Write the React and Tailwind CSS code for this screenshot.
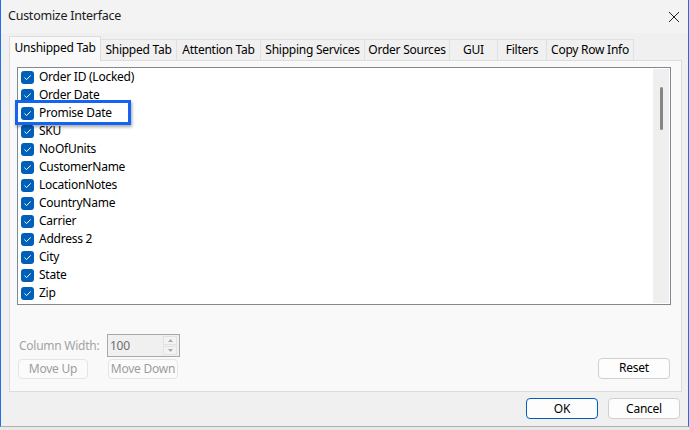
import React from "react";

const items = [
  "Order ID (Locked)",
  "Order Date",
  "Promise Date",
  "SKU",
  "NoOfUnits",
  "CustomerName",
  "LocationNotes",
  "CountryName",
  "Carrier",
  "Address 2",
  "City",
  "State",
  "Zip",
];

const tabs = [
  ["Shipped Tab", 76],
  ["Attention Tab", 84],
  ["Shipping Services", 104],
  ["Order Sources", 85],
  ["GUI", 48],
  ["Filters", 49],
  ["Copy Row Info", 87],
];

function Check() {
  return (
    <div className="w-[13px] h-[13px] rounded-[3px] bg-[#005fb8] flex items-center justify-center shrink-0">
      <svg width="9" height="9" viewBox="0 0 9 9">
        <path d="M1.5 4.6 L3.6 6.6 L7.6 2.4" fill="none" stroke="white" strokeWidth="1" />
      </svg>
    </div>
  );
}

export default function App() {
  return (
    <div className="w-[689px] h-[430px] bg-[#e8e8e8] overflow-hidden" style={{ fontFamily: '"Noto Sans", "Open Sans", sans-serif' }}>
      <div className="w-[689px] h-[427px] bg-[#f0f0f0] border-l border-r border-[#1f6fe8] border-b border-b-[#b0b0b0] relative flex flex-col text-[12px] tracking-[-0.25px] text-[#000]">
        {/* title bar */}
        <div className="h-[33px] flex items-center justify-between pl-[7px] pr-[6px] bg-[#f3f3f3]">
          <span className="text-[12.5px] text-[#1a1a1a]">Customize Interface</span>
          <svg width="12" height="12" viewBox="0 0 12 12" className="mr-[2px]">
            <path d="M1 1 L11 11 M11 1 L1 11" stroke="#222" strokeWidth="1" />
          </svg>
        </div>
        {/* tabs */}
        <div className="h-[27px] pl-[8px] flex items-end relative z-10">
          <div className="w-[92px] bg-[#f9f9f9] border border-[#dcdcdc] border-b-0 flex items-center justify-center pb-[2px] -mb-[1px] h-[25px]">
            <span>Unshipped Tab</span>
          </div>
          {tabs.map(([t, w]) => (
            <div
              key={t}
              style={{ width: w }}
              className="h-[21px] bg-[#f0f0f0] border border-[#e0e0e0] border-l-0 border-b-0 flex items-center justify-center"
            >
              <span className="text-[12px]">{t}</span>
            </div>
          ))}
        </div>
        {/* panel */}
        <div className="ml-[8px] w-[673px] h-[332px] bg-[#f9f9f9] border border-[#dcdcdc] flex flex-col">
          <div className="mt-[6px] ml-[7px] w-[654px] h-[238px] bg-white border border-[#828790] flex">
            <div className="flex-1 pt-0 pl-[3px] relative">
              {items.map((it) => (
                <div key={it} className="h-[18px] flex items-center gap-[5px]">
                  <Check />
                  <span className="text-[12px] leading-none">{it}</span>
                </div>
              ))}
              <div className="absolute left-[-3px] top-[32px] w-[116px] h-[25px] border-[3px] border-[#1464f0] shadow-[1px_2px_3px_rgba(0,0,0,0.35)]"></div>
            </div>
            <div className="w-[16px] mt-[1px] mb-[1px] mr-[1px] bg-[#efefef] relative">
              <div className="absolute left-[7px] top-[18px] w-[3px] h-[43px] rounded bg-[#868686]"></div>
            </div>
          </div>
          <div className="mt-[29px] ml-[9px] flex items-center h-[23px]">
            <span className="text-[#a3a3a3] w-[88px]">Column Width:</span>
            <div className="w-[73px] h-[23px] border border-[#a8a8a8] bg-[#f0f0f0] flex items-center justify-between pl-[2px] pr-[2px]">
              <span className="text-[#6e6e6e]">100</span>
              <div className="w-[14px] h-[19px] flex flex-col gap-[1px]">
                <div className="flex-1 border border-[#e2e2e2] bg-[#f3f3f3] flex items-center justify-center">
                  <svg width="5" height="3" viewBox="0 0 5 3"><path d="M0 3 L2.5 0 L5 3Z" fill="#a9a9a9" /></svg>
                </div>
                <div className="flex-1 border border-[#e2e2e2] bg-[#f3f3f3] flex items-center justify-center">
                  <svg width="5" height="3" viewBox="0 0 5 3"><path d="M0 0 L2.5 3 L5 0Z" fill="#a9a9a9" /></svg>
                </div>
              </div>
            </div>
          </div>
          <div className="ml-[8px] mt-[2px] flex items-center justify-between pr-[11px]">
            <div className="flex gap-[20px]">
              <div className="w-[70px] h-[20px] border border-[#e5e5e5] rounded-[4px] bg-[#fbfbfb] flex items-center justify-center text-[#9d9d9d]">Move Up</div>
              <div className="w-[70px] h-[20px] border border-[#e5e5e5] rounded-[4px] bg-[#fbfbfb] flex items-center justify-center text-[#9d9d9d]">Move Down</div>
            </div>
            <div className="w-[72px] h-[21px] border border-[#d0d0d0] rounded-[4px] bg-[#fdfdfd] flex items-center justify-center -mt-[2px]">Reset</div>
          </div>
        </div>
        {/* footer */}
        <div className="flex justify-end gap-[10px] pr-[8px] mt-[6px]">
          <div className="w-[72px] h-[21px] border border-[#005fb8] rounded-[4px] bg-[#fdfdfd] flex items-center justify-center">OK</div>
          <div className="w-[72px] h-[21px] border border-[#d0d0d0] rounded-[4px] bg-[#fdfdfd] flex items-center justify-center">Cancel</div>
        </div>
      </div>
    </div>
  );
}
